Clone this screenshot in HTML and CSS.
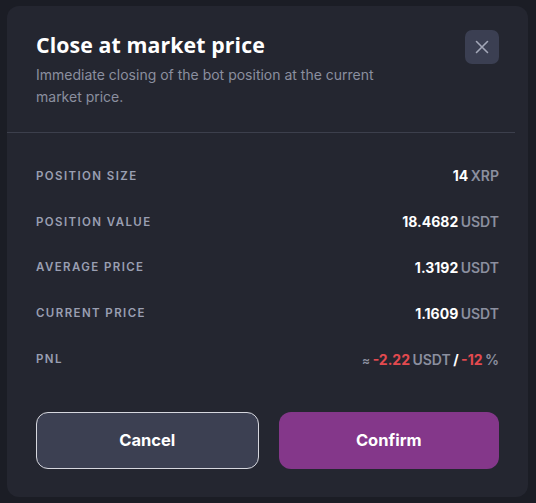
FILE: index.html
```html
<!DOCTYPE html>
<html>
<head>
<meta charset="utf-8">
<link rel="stylesheet" href="styles.css">
</head>
<body>
<div class="backdrop">
  <div class="modal">
    <div class="header">
      <div class="head-text">
        <h1 class="title">Close at market price</h1>
        <p class="subtitle">Immediate closing of the bot position at the current market price.</p>
      </div>
      <button class="close" aria-label="Close">
        <svg width="14" height="14" viewBox="0 0 14 14"><path d="M1.5 1.5 L12.5 12.5 M12.5 1.5 L1.5 12.5" stroke="#a3a7b8" stroke-width="1.6" stroke-linecap="round"/></svg>
      </button>
    </div>
    <div class="divider"></div>
    <div class="rows">
      <div class="row"><span class="label">Position size</span><span class="value"><b>14</b> <span class="unit">XRP</span></span></div>
      <div class="row"><span class="label">Position value</span><span class="value"><b>18.4682</b> <span class="unit">USDT</span></span></div>
      <div class="row"><span class="label">Average price</span><span class="value"><b>1.3192</b> <span class="unit">USDT</span></span></div>
      <div class="row"><span class="label">Current price</span><span class="value"><b>1.1609</b> <span class="unit">USDT</span></span></div>
      <div class="row"><span class="label">PNL</span><span class="value"><span class="unit approx">≈</span> <b class="neg">-2.22</b> <span class="unit">USDT</span> <b>/</b> <b class="neg">-12</b> <span class="unit">%</span></span></div>
    </div>
    <div class="actions">
      <button class="btn cancel">Cancel</button>
      <button class="btn confirm">Confirm</button>
    </div>
  </div>
</div>
</body>
</html>
```
FILE: styles.css
```css
* { box-sizing: border-box; }
html, body { margin: 0; padding: 0; }
body {
  background: #1b1d25;
  font-family: Inter, "Noto Sans", sans-serif;
  width: 536px;
  height: 503px;
  overflow: hidden;
}
.backdrop {
  padding: 6px 8px 6px 7px;
  height: 503px;
}
.modal {
  background: #242630;
  border-radius: 12px;
  height: 491px;
  display: flex;
  flex-direction: column;
}
.header {
  display: flex;
  justify-content: space-between;
  align-items: flex-start;
  padding: 24px 29px 0 29px;
  height: 126px;
}
.head-text { width: 370px; }
.title {
  margin: 0;
  font-family: "Open Sans", Inter, sans-serif;
  font-weight: 700;
  font-size: 21.3px;
  line-height: 30px;
  color: #ffffff;
  letter-spacing: 0.1px;
}
.subtitle {
  margin: 4px 0 0 0;
  font-size: 14px;
  line-height: 22px;
  color: #8b8f9f;
}
.close {
  width: 34px;
  height: 34px;
  margin-top: 0;
  border: none;
  border-radius: 7px;
  background: #3b3f52;
  display: flex;
  align-items: center;
  justify-content: center;
  padding: 0;
}
.divider {
  height: 1px;
  background: #3c3f4c;
  margin-right: 13px;
}
.rows {
  padding: 20px 29px 0 29px;
  display: flex;
  flex-direction: column;
}
.row {
  display: flex;
  justify-content: space-between;
  align-items: center;
  height: 45.8px;
}
.label {
  text-transform: uppercase;
  font-size: 11.5px;
  font-weight: 600;
  letter-spacing: 1.4px;
  color: #9a9fb2;
}
.value {
  font-size: 14px;
  color: #ffffff;
  white-space: nowrap;
  word-spacing: -1.5px;
}
.value b { font-weight: 700; }
.unit { color: #8b8f9f; font-weight: 600; }
.neg { color: #e34a4f; }
.approx { font-size: 12px; }
.actions {
  display: flex;
  gap: 20px;
  padding: 0 29px;
  margin-top: 30px;
}
.btn {
  flex: 1;
  height: 57px;
  border-radius: 12px;
  font-family: Inter, sans-serif;
  font-size: 16.5px;
  font-weight: 700;
  color: #ffffff;
}
.cancel {
  background: #3c4052;
  border: 1px solid #d6d7de;
}
.confirm {
  background: #84378a;
  border: none;
}
```
